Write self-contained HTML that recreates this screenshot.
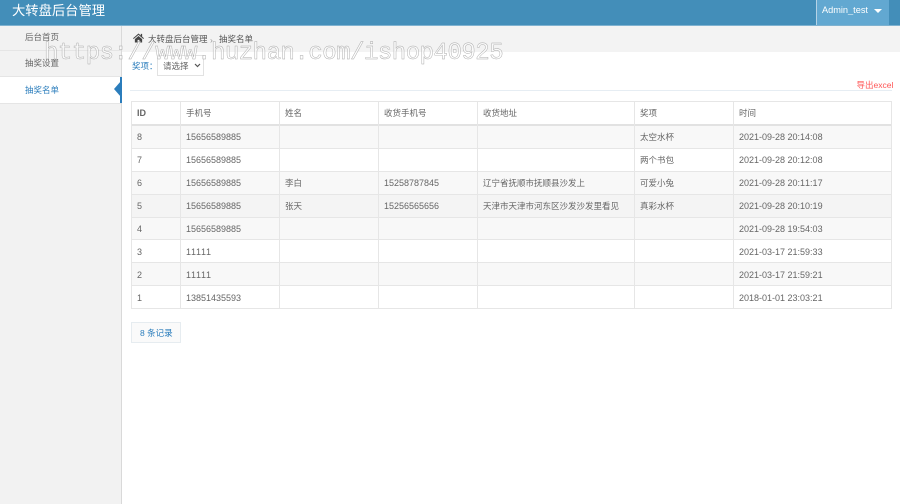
<!DOCTYPE html>
<html lang="zh"><head><meta charset="utf-8"><title>大转盘后台管理</title>
<style>
html,body{margin:0;padding:0;background:#fff}
body{width:900px;height:504px;position:relative;overflow:hidden;font-family:"Liberation Sans","Noto Sans CJK SC",sans-serif;font-size:8.5px;color:#666;font-kerning:none}
.a{position:absolute}
.t{position:absolute;white-space:nowrap;line-height:12px;filter:blur(.3px)}
.n{font-size:9px}
.hl{position:absolute;left:131px;width:761px;height:1px;background:#e6e6e6}
.vl{position:absolute;top:101px;height:208px;width:1px;background:#e6e6e6}
.alt{position:absolute;left:132px;width:759px;height:22px;background:#f8f8f8}
.m{font-family:"Liberation Mono",monospace}
</style></head><body>
<div class="a" style="left:0;top:0;width:900px;height:25px;background:#438eb9"></div>
<div class="a" style="left:0;top:25px;width:900px;height:1px;background:#7fb2d0"></div>
<div class="t" style="left:12px;top:2px;font-size:13.3px;line-height:17px;color:#fff">大转盘后台管理</div>
<div class="a" style="left:816px;top:0;width:73px;height:25px;background:#62a8d1;border-left:1px solid #b5d3e6;box-sizing:border-box"></div>
<div class="t n" style="left:822px;top:4px;color:#fff;font-size:9.2px">Admin_test</div>
<div class="a" style="left:874px;top:9px;width:0;height:0;border-left:4px solid transparent;border-right:4px solid transparent;border-top:4px solid #fff"></div>

<div class="a" style="left:0;top:26px;width:121px;height:478px;background:#f2f2f2"></div>
<div class="a" style="left:121px;top:26px;width:1px;height:478px;background:#d9d9d9"></div>
<div class="a" style="left:0;top:50px;width:121px;height:1px;background:#e5e5e5"></div>
<div class="a" style="left:0;top:76px;width:121px;height:1px;background:#e5e5e5"></div>
<div class="a" style="left:0;top:77px;width:121px;height:26px;background:#fff"></div>
<div class="a" style="left:0;top:103px;width:121px;height:1px;background:#e5e5e5"></div>
<div class="a" style="left:120px;top:77px;width:2px;height:26px;background:#2b7dbc"></div>
<div class="a" style="left:114px;top:81px;width:0;height:0;border-top:8.5px solid transparent;border-bottom:8.5px solid transparent;border-right:7px solid #2b7dbc"></div>
<div class="t" style="left:25px;top:31px">后台首页</div>
<div class="t" style="left:25px;top:57px">抽奖设置</div>
<div class="t" style="left:25px;top:84px;color:#2b7dbc">抽奖名单</div>

<div class="a" style="left:122px;top:26px;width:778px;height:26px;background:#f3f3f3"></div>
<svg class="a" style="left:133px;top:33px" width="11" height="10" viewBox="0 0 12 11"><path d="M6 .5 0 5.800l.7.8L6 2l5.300 4.600.7-.8-2-1.800V1H8.500v1.700zM2 6.800V10.500h3V7.500h2v3h3V6.800L6 3.300z" fill="#444"/></svg>
<div class="t" style="left:148px;top:33px;color:#555">大转盘后台管理</div>
<div class="t" style="left:210px;top:34px;color:#999">›</div>
<div class="t" style="left:219px;top:33px;color:#555">抽奖名单</div>

<div class="t" style="left:132px;top:60px;color:#2b7dbc">奖项：</div>
<div class="a" style="left:157px;top:55px;width:47px;height:21px;border:1px solid #e2e2e2;box-sizing:border-box;background:transparent"></div>
<div class="t" style="left:163px;top:60px">请选择</div>
<svg class="a" style="left:194px;top:63px" width="7" height="5" viewBox="0 0 7 5"><path d="M1 1l2.500 2.500L6 1" fill="none" stroke="#555" stroke-width="1.200"/></svg>

<div class="t" style="left:856.500px;top:79px;color:#f55">导出excel</div>
<div class="a" style="left:130px;top:90px;width:762px;height:1px;background:#e6edf3"></div>

<div class="alt" style="top:126px"></div>
<div class="alt" style="top:172px"></div>
<div class="alt" style="top:195px;background:#f4f4f4"></div>
<div class="alt" style="top:217px"></div>
<div class="alt" style="top:263px"></div>

<div class="hl" style="top:101px"></div>
<div class="hl" style="top:124px;height:2px;background:#e2e2e2"></div>
<div class="hl" style="top:148px"></div>
<div class="hl" style="top:171px"></div>
<div class="hl" style="top:194px"></div>
<div class="hl" style="top:217px"></div>
<div class="hl" style="top:239px"></div>
<div class="hl" style="top:262px"></div>
<div class="hl" style="top:285px"></div>
<div class="hl" style="top:308px"></div>
<div class="vl" style="left:131px"></div>
<div class="vl" style="left:180px"></div>
<div class="vl" style="left:279px"></div>
<div class="vl" style="left:378px"></div>
<div class="vl" style="left:477px"></div>
<div class="vl" style="left:634px"></div>
<div class="vl" style="left:733px"></div>
<div class="vl" style="left:891px"></div>

<div class="t n" style="left:137px;top:107px;font-weight:bold">ID</div>
<div class="t" style="left:186px;top:107px">手机号</div>
<div class="t" style="left:285px;top:107px">姓名</div>
<div class="t" style="left:384px;top:107px">收货手机号</div>
<div class="t" style="left:483px;top:107px">收货地址</div>
<div class="t" style="left:640px;top:107px">奖项</div>
<div class="t" style="left:739px;top:107px">时间</div>

<div class="t n" style="left:137px;top:131px">8</div><div class="t n" style="left:186px;top:131px">15656589885</div><div class="t" style="left:640px;top:131px">太空水杯</div><div class="t n" style="left:739px;top:131px">2021-09-28 20:14:08</div>
<div class="t n" style="left:137px;top:154px">7</div><div class="t n" style="left:186px;top:154px">15656589885</div><div class="t" style="left:640px;top:154px">两个书包</div><div class="t n" style="left:739px;top:154px">2021-09-28 20:12:08</div>
<div class="t n" style="left:137px;top:177px">6</div><div class="t n" style="left:186px;top:177px">15656589885</div><div class="t" style="left:285px;top:177px">李白</div><div class="t n" style="left:384px;top:177px">15258787845</div><div class="t" style="left:483px;top:177px">辽宁省抚顺市抚顺县沙发上</div><div class="t" style="left:640px;top:177px">可爱小兔</div><div class="t n" style="left:739px;top:177px">2021-09-28 20:11:17</div>
<div class="t n" style="left:137px;top:200px">5</div><div class="t n" style="left:186px;top:200px">15656589885</div><div class="t" style="left:285px;top:200px">张天</div><div class="t n" style="left:384px;top:200px">15256565656</div><div class="t" style="left:483px;top:200px">天津市天津市河东区沙发沙发里看见</div><div class="t" style="left:640px;top:200px">真彩水杯</div><div class="t n" style="left:739px;top:200px">2021-09-28 20:10:19</div>
<div class="t n" style="left:137px;top:223px">4</div><div class="t n" style="left:186px;top:223px">15656589885</div><div class="t n" style="left:739px;top:223px">2021-09-28 19:54:03</div>
<div class="t n" style="left:137px;top:246px">3</div><div class="t n" style="left:186px;top:246px">11111</div><div class="t n" style="left:739px;top:246px">2021-03-17 21:59:33</div>
<div class="t n" style="left:137px;top:269px">2</div><div class="t n" style="left:186px;top:269px">11111</div><div class="t n" style="left:739px;top:269px">2021-03-17 21:59:21</div>
<div class="t n" style="left:137px;top:292px">1</div><div class="t n" style="left:186px;top:292px">13851435593</div><div class="t n" style="left:739px;top:292px">2018-01-01 23:03:21</div>

<div class="a" style="left:131px;top:322px;width:50px;height:21px;background:#fafafa;border:1px solid #e6ecf0;box-sizing:border-box"></div>
<div class="t" style="left:140px;top:327px;color:#2b7dbc">8 条记录</div>

<div class="a m" style="left:44px;top:40px;font-size:24px;letter-spacing:-.49px;line-height:28px;white-space:nowrap;color:rgba(255,255,255,.6);-webkit-text-stroke:.45px #aaa">https://www.huzhan.com/ishop40925</div>
</body></html>
